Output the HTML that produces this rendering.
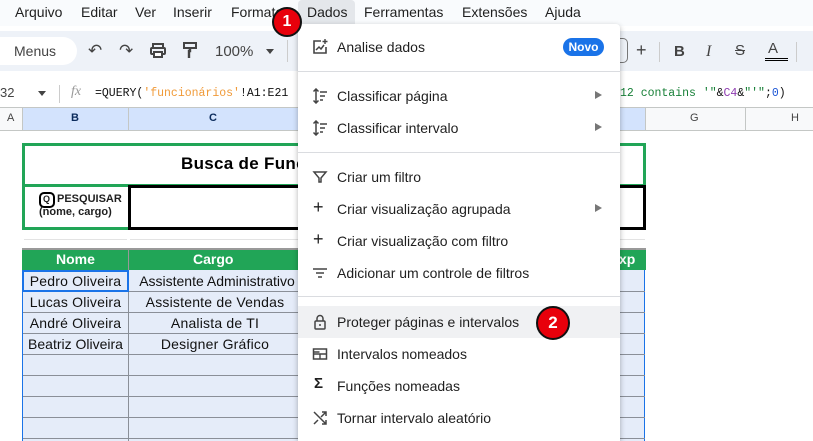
<!DOCTYPE html>
<html><head><meta charset="utf-8"><style>
*{margin:0;padding:0;box-sizing:border-box}
body{width:813px;height:441px;overflow:hidden;background:#fff;font-family:"Liberation Sans",sans-serif;position:relative;color:#1f1f1f}
.a{position:absolute}
.menu span{position:absolute;top:4px;font-size:14px;color:#1f1f1f}
.mi{position:absolute;left:0;width:322px;height:32px;font-size:14px;color:#1f1f1f}
.mi .t{position:absolute;left:39px;top:8px}
.mi .ic{position:absolute;left:14px;top:8px;width:16px;height:16px}
.arr{position:absolute;left:297px;top:11px;width:0;height:0;border-left:7px solid #777;border-top:4px solid transparent;border-bottom:4px solid transparent}
.sep{position:absolute;left:0;width:322px;height:1px;background:#dadce0}
.cell{position:absolute;font-size:14px;text-align:center;color:#111;line-height:20px;letter-spacing:0.2px}
.hl{position:absolute;height:1px;background:#8a8f98}
</style></head><body>
<div class="a" style="left:0;top:0;width:813px;height:26px;background:#f9fbfd"></div>
<div class="menu">
<span style="left:15px">Arquivo</span><span style="left:81px">Editar</span><span style="left:135px">Ver</span><span style="left:173px">Inserir</span><span style="left:231px">Formatar</span>
<span style="left:364px">Ferramentas</span><span style="left:462px">Extensões</span><span style="left:545px">Ajuda</span>
</div>
<div class="a" style="left:298px;top:0;width:57px;height:24px;background:#e4e7eb;border-radius:4px 4px 0 0"></div>
<span class="a" style="left:307px;top:4px;font-size:14px">Dados</span>
<div class="a" style="left:0;top:31px;width:813px;height:40px;background:#eef2f8"></div>
<div class="a" style="left:-20px;top:37px;width:97px;height:28px;background:#fff;border-radius:14px"></div>
<span class="a" style="left:14px;top:43px;font-size:14px;color:#444">Menus</span>
<span class="a" style="left:88px;top:41px;font-size:17px;color:#444">↶</span>
<span class="a" style="left:119px;top:41px;font-size:17px;color:#444">↷</span>
<svg class="a" style="left:150px;top:43px" width="16" height="15"><rect x="3" y="1" width="10" height="4" fill="none" stroke="#444" stroke-width="2"/><rect x="1" y="5" width="14" height="6" rx="1" fill="none" stroke="#444" stroke-width="2"/><rect x="4" y="9" width="8" height="5" fill="#fff" stroke="#444" stroke-width="2"/></svg>
<svg class="a" style="left:183px;top:42px" width="14" height="17"><rect x="1" y="1" width="12" height="5" fill="none" stroke="#444" stroke-width="2"/><path d="M7 6v3h-1v7" stroke="#444" stroke-width="2.4" fill="none"/></svg>
<span class="a" style="left:215px;top:43px;font-size:15px;color:#444">100%</span>
<div class="a" style="left:266px;top:49px;border-top:5px solid #444;border-left:4px solid transparent;border-right:4px solid transparent"></div>
<div class="a" style="left:287px;top:40px;width:1px;height:22px;background:#ccc"></div>
<div class="a" style="left:610px;top:38px;width:18px;height:25px;border:1px solid #777;border-left:none;border-radius:0 5px 5px 0"></div>
<span class="a" style="left:636px;top:40px;font-size:18px;color:#444">+</span>
<div class="a" style="left:659px;top:42px;width:1px;height:20px;background:#ccc"></div>
<span class="a" style="left:674px;top:43px;font-size:15px;font-weight:bold;color:#444">B</span>
<span class="a" style="left:706px;top:43px;font-size:16px;font-style:italic;color:#444;font-family:'Liberation Serif'">I</span>
<span class="a" style="left:735px;top:42px;font-size:15px;color:#444;text-decoration:line-through">S</span>
<span class="a" style="left:768px;top:40px;font-size:15px;color:#444">A</span>
<div class="a" style="left:765px;top:58px;width:23px;height:3px;border-top:1px solid #000;border-bottom:1px solid #000"></div>
<div class="a" style="left:796px;top:42px;width:1px;height:20px;background:#ccc"></div>
<span class="a" style="left:0;top:85px;font-size:13px;color:#444">32</span>
<div class="a" style="left:38px;top:91px;border-top:5px solid #444;border-left:4px solid transparent;border-right:4px solid transparent"></div>
<div class="a" style="left:59px;top:85px;width:1px;height:18px;background:#ccc"></div>
<span class="a" style="left:71px;top:84px;font-size:14px;font-style:italic;color:#999;font-family:'Liberation Serif'">fx</span>
<span class="a" style="left:95px;top:87px;font-size:11.5px;font-family:'Liberation Mono';color:#111">=QUERY(<span style="color:#f09a38">'funcionários'</span>!A1:E21</span>
<span class="a" style="left:620px;top:87px;font-size:11.5px;font-family:'Liberation Mono';color:#188038">12 contains '"<span style="color:#111">&amp;</span><span style="color:#8e3bb0">C4</span><span style="color:#111">&amp;</span>"'"<span style="color:#111">;</span><span style="color:#1a55d6">0</span><span style="color:#111">)</span></span>
<div class="a" style="left:0;top:107px;width:813px;height:24px;background:#f8f9fa;border-top:1px solid #c4c7c5;border-bottom:1px solid #c4c7c5"></div>
<div class="a" style="left:23px;top:108px;width:275px;height:22px;background:#d3e3fd"></div>
<div class="a" style="left:620px;top:108px;width:25px;height:22px;background:#d3e3fd"></div>
<div class="a" style="left:22px;top:108px;width:1px;height:23px;background:#c4c7c5"></div>
<div class="a" style="left:128px;top:108px;width:1px;height:23px;background:#c4c7c5"></div>
<div class="a" style="left:645px;top:108px;width:1px;height:23px;background:#c4c7c5"></div>
<div class="a" style="left:745px;top:108px;width:1px;height:23px;background:#c4c7c5"></div>
<span class="a" style="left:7px;top:112px;font-size:11px;color:#444">A</span>
<span class="a" style="left:71px;top:112px;font-size:11px;font-weight:bold;color:#0b2b5c">B</span>
<span class="a" style="left:209px;top:112px;font-size:11px;font-weight:bold;color:#0b2b5c">C</span>
<span class="a" style="left:690px;top:112px;font-size:11px;color:#444">G</span>
<span class="a" style="left:791px;top:112px;font-size:11px;color:#444">H</span>
<div class="a" style="left:22px;top:143px;width:624px;height:87px;border:3px solid #21a557"></div>
<div class="a" style="left:22px;top:184px;width:624px;height:3px;background:#21a557"></div>
<div class="a" style="left:128px;top:185px;width:518px;height:45px;border:3px solid #000"></div>
<span class="a" style="left:181px;top:154px;font-size:17px;font-weight:bold;color:#000;letter-spacing:0.3px">Busca de Funcionários</span>
<div class="a" style="left:39px;top:192px;width:16px;height:16px;border:2px solid #000;border-radius:5px"></div>
<span class="a" style="left:43px;top:194px;font-size:9px;font-weight:bold">Q</span>
<span class="a" style="left:57px;top:193px;font-size:11px;font-weight:bold">PESQUISAR</span>
<span class="a" style="left:39px;top:206px;font-size:11px;font-weight:bold">(nome, cargo)</span>
<div class="a" style="left:24px;top:239px;width:103px;height:1px;background:#e3e3e3"></div>
<div class="a" style="left:130px;top:239px;width:515px;height:1px;background:#e3e3e3"></div>
<div class="a" style="left:22px;top:248px;width:624px;height:22px;background:#21a557;border-top:2px solid #999"></div>
<span class="a" style="left:56px;top:251px;font-size:14px;font-weight:bold;color:#fff">Nome</span>
<span class="a" style="left:193px;top:251px;font-size:14px;font-weight:bold;color:#fff">Cargo</span>
<span class="a" style="left:619px;top:251px;font-size:14px;font-weight:bold;color:#fff">xp</span>
<div class="a" style="left:128px;top:248px;width:1px;height:22px;background:#999"></div>
<div class="a" style="left:22px;top:270px;width:623px;height:171px;background:#e5ecf9;border-left:1px solid #1a73e8;border-right:1px solid #1a73e8"></div>
<div class="a" style="left:128px;top:270px;width:1px;height:171px;background:#8a8f98"></div>
<div class="hl" style="left:23px;top:291px;width:622px"></div>
<div class="hl" style="left:23px;top:312px;width:622px"></div>
<div class="hl" style="left:23px;top:333px;width:622px"></div>
<div class="hl" style="left:23px;top:354px;width:622px"></div>
<div class="hl" style="left:23px;top:375px;width:622px"></div>
<div class="hl" style="left:23px;top:396px;width:622px"></div>
<div class="hl" style="left:23px;top:417px;width:622px"></div>
<div class="hl" style="left:23px;top:438px;width:622px"></div>
<div class="a" style="left:22px;top:270px;width:107px;height:22px;border:2px solid #1a73e8"></div>
<div class="cell" style="left:23px;top:271px;width:105px">Pedro Oliveira</div>
<div class="cell" style="left:23px;top:292px;width:105px">Lucas Oliveira</div>
<div class="cell" style="left:23px;top:313px;width:105px">André Oliveira</div>
<div class="cell" style="left:23px;top:334px;width:105px;letter-spacing:0">Beatriz Oliveira</div>
<div class="cell" style="left:131px;top:271px;width:172px;white-space:nowrap;letter-spacing:0">Assistente Administrativo</div>
<div class="cell" style="left:129px;top:292px;width:172px">Assistente de Vendas</div>
<div class="cell" style="left:129px;top:313px;width:172px">Analista de TI</div>
<div class="cell" style="left:129px;top:334px;width:172px">Designer Gráfico</div>
<div class="a" style="left:298px;top:24px;width:322px;height:417px;background:#fff;border-radius:0 4px 0 0;box-shadow:0 2px 6px rgba(0,0,0,.3)">
 <div class="mi" style="top:7px"><svg class="ic" viewBox="0 0 16 16"><path d="M9 2H2v12h12V8" fill="none" stroke="#444" stroke-width="1.6"/><path d="M4 11l3-3 2 2 3-4" fill="none" stroke="#444" stroke-width="1.5"/><path d="M13 0v5M10.5 2.5h5" stroke="#444" stroke-width="1.4"/></svg><span class="t">Analise dados</span>
 <span style="position:absolute;left:265px;top:7px;width:41px;height:18px;background:#1a73e8;border-radius:9px;color:#fff;font-size:12px;font-weight:bold;text-align:center;line-height:18px">Novo</span></div>
 <div class="sep" style="top:47px"></div>
 <div class="mi" style="top:56px"><svg class="ic" viewBox="0 0 16 16"><path d="M4 1v14M1.5 3.5L4 1l2.5 2.5M1.5 12.5L4 15l2.5-2.5M8 4h7M8 8h5M8 12h3" fill="none" stroke="#444" stroke-width="1.5"/></svg><span class="t">Classificar página</span><div class="arr"></div></div>
 <div class="mi" style="top:88px"><svg class="ic" viewBox="0 0 16 16"><path d="M4 1v14M1.5 3.5L4 1l2.5 2.5M1.5 12.5L4 15l2.5-2.5M8 4h7M8 8h5M8 12h3" fill="none" stroke="#444" stroke-width="1.5"/></svg><span class="t">Classificar intervalo</span><div class="arr"></div></div>
 <div class="sep" style="top:128px"></div>
 <div class="mi" style="top:137px"><svg class="ic" viewBox="0 0 16 16"><path d="M2 3h12l-5 6v4h-2V9z" fill="none" stroke="#444" stroke-width="1.5"/></svg><span class="t">Criar um filtro</span></div>
 <div class="mi" style="top:169px"><span class="ic" style="font-size:18px;top:4px;left:15px">+</span><span class="t">Criar visualização agrupada</span><div class="arr"></div></div>
 <div class="mi" style="top:201px"><span class="ic" style="font-size:18px;top:4px;left:15px">+</span><span class="t">Criar visualização com filtro</span></div>
 <div class="mi" style="top:233px"><svg class="ic" viewBox="0 0 16 16"><path d="M1 4h14M4 8h8M6 12h4" stroke="#444" stroke-width="1.6"/></svg><span class="t">Adicionar um controle de filtros</span></div>
 <div class="sep" style="top:272px"></div>
 <div class="mi" style="top:282px;background:#f0f1f3"><svg class="ic" viewBox="0 0 16 16"><rect x="3" y="7" width="10" height="8" rx="1" fill="none" stroke="#444" stroke-width="1.5"/><path d="M5 7V4.5a3 3 0 016 0V7" fill="none" stroke="#444" stroke-width="1.5"/><circle cx="8" cy="11" r="1" fill="#444"/></svg><span class="t">Proteger páginas e intervalos</span></div>
 <div class="mi" style="top:314px"><svg class="ic" viewBox="0 0 16 16"><rect x="1.5" y="3" width="13" height="10" fill="none" stroke="#444" stroke-width="1.5"/><path d="M1.5 8h13M8 8v5M1.5 6h6" stroke="#444" stroke-width="1.4"/></svg><span class="t">Intervalos nomeados</span></div>
 <div class="mi" style="top:346px"><span class="ic" style="font-size:15px;top:5px;left:16px;font-weight:bold">Σ</span><span class="t">Funções nomeadas</span></div>
 <div class="mi" style="top:378px"><svg class="ic" viewBox="0 0 16 16"><path d="M2 2l12 12M10 14h4v-4M10 2h4v4M14 2L9 7M2 14l4-4" fill="none" stroke="#444" stroke-width="1.5"/></svg><span class="t">Tornar intervalo aleatório</span></div>
</div>
<div class="a" style="left:272px;top:7px;width:30px;height:30px;border-radius:50%;background:#e8000b;border:2px solid #111;color:#fff;font-weight:bold;font-size:16px;text-align:center;line-height:26px">1</div>
<div class="a" style="left:536px;top:306px;width:34px;height:34px;border-radius:50%;background:#e8000b;border:2px solid #111;color:#fff;font-weight:bold;font-size:17px;text-align:center;line-height:30px">2</div>
</body></html>
